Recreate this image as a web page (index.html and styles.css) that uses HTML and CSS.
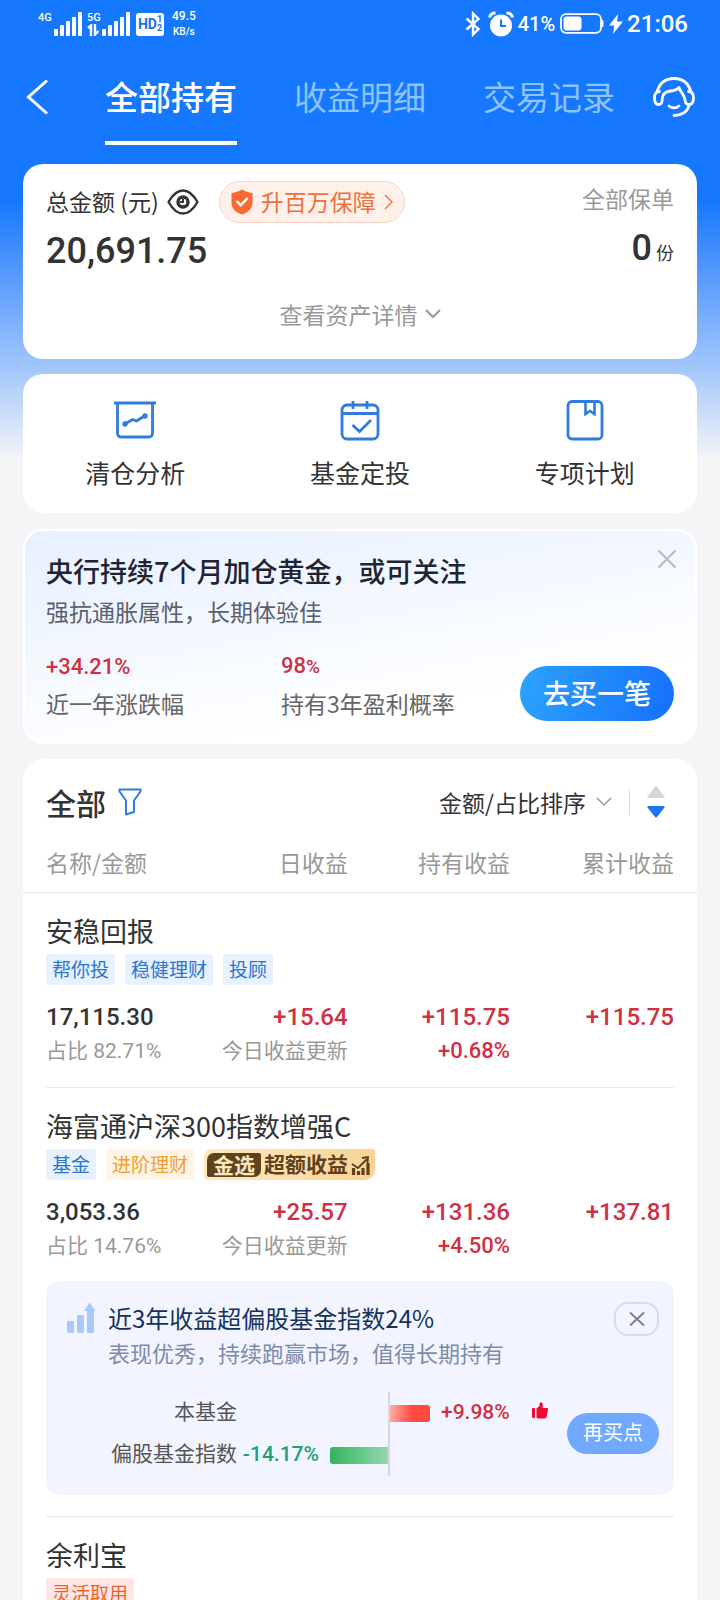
FILE: index.html
```html
<!DOCTYPE html>
<html lang="zh-CN">
<head>
<meta charset="utf-8">
<meta name="viewport" content="width=device-width, initial-scale=1">
<title>全部持有</title>
<link rel="stylesheet" href="styles.css">
</head>
<body>
<div class="screen">
  <div class="status">
    <div class="status-left">
      <span class="net">4G</span>
      <svg class="bars" width="28" height="24" viewBox="0 0 28 24" fill="currentColor"><rect x="0" y="17" width="4" height="7" rx="1"/><rect x="6" y="13" width="4" height="11" rx="1"/><rect x="12" y="9" width="4" height="15" rx="1"/><rect x="18" y="5" width="4" height="19" rx="1"/><rect x="24" y="0" width="4" height="24" rx="1"/></svg>
      <span class="net net-5g">5G
        <svg width="12" height="12" viewBox="0 0 12 12" fill="none" stroke="currentColor" stroke-width="2.4"><path d="M1 4 4 1.5V12M8 0v10.5L11.4 7"/></svg>
      </span>
      <svg class="bars" width="28" height="24" viewBox="0 0 28 24" fill="currentColor"><rect x="0" y="17" width="4" height="7" rx="1"/><rect x="6" y="13" width="4" height="11" rx="1"/><rect x="12" y="9" width="4" height="15" rx="1"/><rect x="18" y="5" width="4" height="19" rx="1"/><rect x="24" y="0" width="4" height="24" rx="1"/></svg>
      <span class="hd">HD<span class="hd-n"><span>1</span><span>2</span></span></span>
      <span class="speed"><span>49.5</span><span class="unit">KB/s</span></span>
    </div>
    <div class="status-right">
      <svg width="16" height="26" viewBox="0 0 16 26" fill="none" stroke="currentColor" stroke-width="2.4"><path d="M1.500 7.500 13.500 18 8 23.500V2.500L13.500 8 1.500 18.500"/></svg>
      <svg class="alarm" width="26" height="26" viewBox="0 0 26 26"><circle cx="13" cy="14.500" r="11" fill="#fff"/><path d="M1.500 6.500a6 6 0 0 1 6-4.500M24.500 6.500a6 6 0 0 0-6-4.500" fill="none" stroke="#fff" stroke-width="3"/><path d="M13 8.500V15h5" fill="none" stroke="#1677ff" stroke-width="2"/></svg>
      <span class="pct">41%</span>
      <svg width="44" height="22" viewBox="0 0 44 22"><rect x="1" y="1.200" width="40" height="18.600" rx="5" fill="none" stroke="#fff" stroke-width="1.800"/><rect x="3.500" y="3.500" width="18" height="14" rx="3" fill="#fff"/><path d="M42 7.500h1v6h-1z" fill="#fff" stroke="#fff"/></svg>
      <svg class="bolt" width="14" height="20" viewBox="0 0 14 20" fill="currentColor"><path d="M9 0 0 11.500h5.200L4 20 14 7.500H8z"/></svg>
      <span class="clock">21:06</span>
    </div>
  </div>

  <header class="nav">
    <button class="icon-btn" aria-label="返回"><svg width="23" height="36" viewBox="0 0 23 36" fill="none" stroke="currentColor" stroke-width="3"><path d="M21 1.500 2.500 18 21 34.500"/></svg></button>
    <nav class="tabs">
      <a class="tab active" href="#">全部持有</a>
      <a class="tab" href="#">收益明细</a>
      <a class="tab" href="#">交易记录</a>
    </nav>
    <button class="icon-btn" aria-label="客服"><svg width="42" height="40" viewBox="0 0 42 40" fill="none" stroke="currentColor" stroke-width="2.800" stroke-linecap="round" stroke-linejoin="round"><path d="M4 15C6.500 6 13 1.500 21 1.500S35.500 6 38 15"/><path d="M6.500 14.500C3 14.500 1.500 17 1.500 21s1.500 6.500 4 6.500c2.500 0 3.500-1.500 3.700-4.500.3-6.500 3.300-8.500 8.300-9 4-.3 6.500-1.300 8.500-3.500 1.500 5 5.500 6.500 6 12.500.2 3 1.500 4.500 4 4.500 3 0 4.500-2.500 4.500-6.500s-1.500-6.500-5-6.500"/><path d="M16 29c3 2.300 7 2.300 10 0M36 28c-1 6.500-7 10.500-15 10.500"/></svg></button>
  </header>

  <main class="main">
    <section class="card summary">
      <div class="sum-top">
        <div class="sum-label">
          <span>总金额 (元)</span>
          <button class="icon-btn eye" aria-label="隐藏金额"><svg width="32" height="26" viewBox="0 0 32 26" fill="none" stroke="currentColor" stroke-width="2.400" stroke-linejoin="round"><path d="M1.500 13C6 5 10.500 1.500 16 1.500S26 5 30.500 13C26 21 21.500 24.500 16 24.500S6 21 1.500 13z"/><circle cx="16" cy="13" r="5" stroke-width="3.400"/><path d="M13 13h3v-3" stroke-width="2"/></svg></button>
          <button class="pill"><svg width="22" height="26" viewBox="0 0 22 26"><path d="M11 .5c3 2 6.500 3 10.500 3.500V14c0 6-4.500 9.500-10.500 11.500C5 23.500.5 20 .5 14V4C4.500 3.500 8 2.500 11 .5z" fill="#fa6a32"/><path d="m5.500 12 4.200 4.200 7-7.200" fill="none" stroke="#fff" stroke-width="2.400"/></svg><span>升百万保障</span><svg width="9" height="16" viewBox="0 0 9 16" fill="none" stroke="currentColor" stroke-width="1.300"><path d="m1 1 7 7-7 7"/></svg></button>
        </div>
        <span class="muted policy">全部保单</span>
      </div>
      <div class="sum-values">
        <strong class="total">20,691.75</strong>
        <span class="count"><strong class="total">0</strong> 份</span>
      </div>
      <button class="details">查看资产详情<svg width="16" height="10" viewBox="0 0 16 10" fill="none" stroke="currentColor" stroke-width="2"><path d="m1 1 7 7 7-7"/></svg></button>
    </section>

    <section class="card tools">
      <a class="tool" href="#"><svg width="44" height="44" viewBox="0 0 44 44" fill="none" stroke="currentColor" stroke-width="2.800"><path d="M1 4h42M4.500 4v30q0 4 4 4h27q4 0 4-4V4"/><path d="m12 25 7.500-4.500 4 1.500 8-5"/><circle cx="12" cy="25" r="1.700" fill="currentColor" stroke-width="2"/><circle cx="32" cy="17" r="1.700" fill="currentColor" stroke-width="2"/></svg>清仓分析</a>
      <a class="tool" href="#"><svg width="44" height="44" viewBox="0 0 44 44" fill="none" stroke="currentColor" stroke-width="2.800"><rect x="4" y="6" width="36" height="34" rx="5"/><path d="M4 14.500h36M15 2v8M29 2v8M14.500 26l7 6.500L33 21"/></svg>基金定投</a>
      <a class="tool" href="#"><svg width="44" height="44" viewBox="0 0 44 44" fill="none" stroke="currentColor" stroke-width="2.800"><rect x="5" y="2.500" width="34" height="37.500" rx="4"/><path d="M22.500 3v12l4.500-3 4.500 3V3" stroke-width="2.600"/></svg>专项计划</a>
    </section>

    <section class="card promo">
      <button class="icon-btn promo-close" aria-label="关闭"><svg width="20" height="20" viewBox="0 0 20 20" fill="none" stroke="currentColor" stroke-width="2"><path d="m1.500 1.500 17 17m0-17-17 17"/></svg></button>
      <h2 class="promo-title">央行持续7个月加仓黄金，或可关注</h2>
      <p class="promo-sub">强抗通胀属性，长期体验佳</p>
      <div class="metrics">
        <div><div class="metric-num">+34.21%</div><div class="metric-label">近一年涨跌幅</div></div>
        <div><div class="metric-num">98<small>%</small></div><div class="metric-label">持有3年盈利概率</div></div>
        <button class="buy">去买一笔</button>
      </div>
    </section>

    <section class="card list">
      <div class="list-head">
        <h2 class="list-title">全部</h2>
        <button class="icon-btn filter" aria-label="筛选"><svg width="24" height="28" viewBox="0 0 24 28" fill="none" stroke="currentColor" stroke-width="2" stroke-linejoin="round"><path d="M1.500 1.500h21v2L16 12.500V24l-8 2.500V12.500L1.500 3.500z"/></svg></button>
        <select class="sort" aria-label="排序方式"><option>金额/占比排序</option></select>
        <svg class="sort-arrow" width="16" height="10" viewBox="0 0 16 10" fill="none" stroke="currentColor" stroke-width="1.500"><path d="m1 1 7 7 7-7"/></svg>
        <span class="vline"></span>
        <button class="icon-btn order" aria-label="切换升降序"><svg width="18" height="32" viewBox="0 0 18 32"><path d="M8 1q1-1 2 0l7.500 9.500q.5 1.500-1 1.500h-15Q0 12 .5 10.500z" fill="#d6d6d6"/><path d="M8 31q1 1 2 0l7.500-9.500q.5-1.500-1-1.500h-15Q0 20 .5 21.500z" fill="#1a73f8"/></svg></button>
      </div>
      <table class="holdings">
        <colgroup><col><col><col><col class="last-col"></colgroup>
        <thead><tr><th>名称/金额</th><th>日收益</th><th>持有收益</th><th>累计收益</th></tr></thead>
        <tbody>
          <tr><td class="name-cell" colspan="4"><div class="name">安稳回报</div><div class="tags"><span class="tag">帮你投</span><span class="tag">稳健理财</span><span class="tag">投顾</span></div></td></tr>
          <tr class="values">
            <td><div class="num">17,115.30</div><div class="sub">占比 82.71%</div></td>
            <td><div class="num up">+15.64</div><div class="sub">今日收益更新</div></td>
            <td><div class="num up">+115.75</div><div class="rate up">+0.68%</div></td>
            <td><div class="num up">+115.75</div></td>
          </tr>
          <tr><td class="rule-cell" colspan="4"><div class="rule"></div></td></tr>
        </tbody>
        <tbody>
          <tr><td class="name-cell" colspan="4"><div class="name">海富通沪深300指数增强C</div><div class="tags"><span class="tag">基金</span><span class="tag amber">进阶理财</span><span class="gold"><span class="gold-chip">金选</span><span class="gold-text">超额收益</span><svg width="19" height="20" viewBox="0 0 19 20" fill="none" stroke="currentColor"><path d="M2.500 20v-7M7.500 20v-4M12 20v-7M17 20V8" stroke-width="3.200"/><path d="m1 9 6 4 9-9M11 3l6-1-.5 6" stroke-width="1.800"/></svg></span></div></td></tr>
          <tr class="values">
            <td><div class="num">3,053.36</div><div class="sub">占比 14.76%</div></td>
            <td><div class="num up">+25.57</div><div class="sub">今日收益更新</div></td>
            <td><div class="num up">+131.36</div><div class="rate up">+4.50%</div></td>
            <td><div class="num up">+137.81</div></td>
          </tr>
          <tr><td class="insight-cell" colspan="4">
            <div class="insight">
              <svg class="insight-icon" width="29" height="32" viewBox="0 0 29 32" fill="#a9c9fa"><rect x="0" y="19" width="7" height="12" rx="1"/><rect x="10" y="13" width="7" height="18" rx="1"/><path d="M20 30V9h-3l5.500-8.500L28.500 9H27v21q0 1-1 1h-5q-1 0-1-1z"/></svg>
              <div class="insight-text">
                <div class="insight-title">近3年收益超偏股基金指数24%</div>
                <div class="insight-sub">表现优秀，持续跑赢市场，值得长期持有</div>
              </div>
              <button class="insight-close" aria-label="关闭"><svg width="16" height="14" viewBox="0 0 16 14" fill="none" stroke="currentColor" stroke-width="2"><path d="m1 .5 14 13m0-13-14 13"/></svg></button>
              <div class="chart">
                <span class="chart-label">本基金</span><span class="neg"></span>
                <span class="pos"><i class="bar red"></i><span class="chart-num up">+9.98%</span><svg class="thumb" width="16" height="17" viewBox="0 0 16 17" fill="#f5082f"><rect x="0" y="6" width="3" height="10" rx="1"/><path d="M4.500 6.500 7.500 4l.2-3c.8-1.400 3-.7 3 1.200V6H15q1.300.2 1 1.600l-1.400 7.200q-.4 1.700-2 1.700H6q-1.500 0-1.500-1.500z"/></svg></span>
                <span class="chart-label">偏股基金指数</span>
                <span class="neg"><span class="chart-num down">-14.17%</span><i class="bar green"></i></span><span class="pos"></span>
              </div>
              <button class="rebuy">再买点</button>
            </div>
          </td></tr>
          <tr><td class="rule-cell" colspan="4"><div class="rule"></div></td></tr>
        </tbody>
        <tbody>
          <tr><td class="name-cell" colspan="4"><div class="name">余利宝</div><div class="tags"><span class="tag rose">灵活取用</span></div></td></tr>
        </tbody>
      </table>
    </section>
  </main>
</div>
</body>
</html>
```
FILE: styles.css
```css
* { box-sizing: border-box; }
body, h2, p { margin: 0; }
body {
  font-family: "Noto Sans CJK SC", sans-serif;
  font-size: 23px;
  line-height: 30px;
  color: #333;
}
button, select { font: inherit; color: inherit; border: 0; background: none; padding: 0; margin: 0; }
a { color: inherit; text-decoration: none; }
svg { display: block; flex: none; }

.screen {
  height: 100vh;
  overflow: hidden auto;
  scrollbar-width: none;
  background: #f5f5f8 linear-gradient(#1677ff 0, #1677ff 200px, #4a93fb 260px, #a0c5fb 365px, #f5f5f8 460px) no-repeat;
}
.icon-btn { display: flex; }

/* status bar */
.status {
  display: flex;
  justify-content: space-between;
  align-items: center;
  height: 48px;
  padding: 0 32px 0 38px;
  color: #fff;
  font-family: Roboto, sans-serif;
  font-weight: 500;
}
.status-left, .status-right { display: flex; align-items: center; }
.net { align-self: flex-start; width: 16px; margin-top: 3px; font-size: 11px; line-height: 12px; }
.net-5g { width: 15px; margin-left: 5px; display: flex; flex-direction: column; }
.hd {
  display: flex;
  align-items: center;
  justify-content: center;
  width: 28px;
  height: 23px;
  margin-left: 6px;
  border-radius: 3px;
  background: #fff;
  color: #1f6fe0;
  font-size: 14px;
  font-weight: 700;
}
.hd-n { display: flex; flex-direction: column; font-size: 9px; line-height: 9px; }
.speed { display: flex; flex-direction: column; align-items: center; margin-left: 8px; font-size: 12px; line-height: 15px; }
.unit { font-size: 10px; }
.alarm { margin-left: 7px; }
.pct { margin: 0 5px 0 4px; font-size: 20px; }
.bolt { margin: 0 4px 0 5px; }
.clock { font-size: 24px; }

/* navigation */
.nav {
  display: flex;
  align-items: center;
  height: 97px;
  padding: 0 25px 0 26px;
  color: #fff;
}
.tabs { display: flex; gap: 57px; align-self: stretch; margin: 0 38px 0 auto; }
.tab {
  display: flex;
  align-items: center;
  padding-bottom: 2px;
  border-bottom: 4px solid transparent;
  border-top: 4px solid transparent;
  font-size: 33px;
  color: #8cc4ff;
}
.tab.active { border-bottom-color: #fff; color: #fff; font-weight: 500; }

/* cards */
.main { display: flex; flex-direction: column; gap: 15px; padding: 19px 23px 0; }
.card { border-radius: 20px; background: #fff; }
.muted { color: #999; }

.summary { display: flex; flex-direction: column; padding: 17px 23px 30px; }
.sum-top, .sum-values { display: flex; justify-content: space-between; }
.sum-label { display: flex; align-items: center; height: 42px; }
.eye { margin: 0 20px 0 8px; }
.pill {
  display: flex;
  align-items: center;
  gap: 8px;
  height: 42px;
  padding: 0 11px;
  border: 1px solid #fbd5c8;
  border-radius: 21px;
  background: #fff0ea;
  color: #f0703c;
}
.pill span, .sum-label > span { padding-bottom: 2px; }
.policy { line-height: 35px; }
.sum-values { margin-top: 6px; line-height: 44px; }
.total { font-family: Roboto, sans-serif; font-size: 36px; font-weight: 500; }
.count { font-size: 18px; line-height: 38px; }
.details { display: flex; align-items: center; align-self: center; gap: 7px; margin-top: 26px; color: #999; }

.tools { display: grid; grid-template-columns: repeat(3, 1fr); padding: 25px 0 23px; }
.tool { display: flex; flex-direction: column; align-items: center; gap: 11px; font-size: 25px; line-height: 36px; }
.tool svg { color: #2f7be0; }

.promo {
  position: relative;
  padding: 22px 21px 21px;
  border: 2px solid #fff;
  background: linear-gradient(170deg, #e6f0ff, #f5f9ff 45%, #fff 75%);
}
.tools + .promo { margin-top: 1px; }
.promo-close { position: absolute; top: 18px; right: 18px; color: #b5bac4; }
.promo-title { font-size: 27px; line-height: 36px; font-weight: 500; color: #1f2433; }
.promo-sub { margin-top: 7px; color: #5a606e; }
.metrics { display: grid; grid-template-columns: 235px 1fr auto; margin-top: 26px; align-items: end; }
.metric-num { font-family: Roboto, sans-serif; font-size: 22px; font-weight: 500; line-height: 28px; color: #cf3043; }
.metric-num small { font-size: 19px; }
.metric-label { margin-top: 7px; padding-bottom: 3px; color: #666; }
.buy {
  height: 55px;
  padding: 0 23px 2px;
  border-radius: 28px;
  background: linear-gradient(100deg, #2ba3fb, #1670fb);
  color: #fff;
  font-size: 27px;
  font-weight: 500;
}

/* holdings list */
.list { padding-bottom: 24px; }
.list-head { display: flex; align-items: center; padding: 21px 32px 0 23px; line-height: 44px; }
.list-title { font-size: 30px; font-weight: 500; }
.filter { margin: 0 auto 0 12px; color: #2f7be0; }
.sort { appearance: none; outline: 0; }
.sort-arrow { margin: 0 17px 0 9px; color: #999; }
.vline { width: 1px; height: 26px; margin-right: 17px; background: #ddd; }

.holdings { width: 100%; table-layout: fixed; border-collapse: collapse; }
.last-col { width: 187px; }
th, td { padding: 0; text-align: right; vertical-align: top; font-weight: 400; }
th { padding: 21px 0 13px; line-height: 34px; color: #999; border-bottom: 1px solid #e8e8e8; }
tr > :first-child { padding-left: 23px; text-align: left; }
tr > :last-child { padding-right: 23px; }
td.name-cell { padding-top: 20px; }
.name { font-size: 27px; line-height: 36px; }
.tags { display: flex; gap: 10px; margin-top: 5px; }
.tag { padding: 0 6px 2px; border-radius: 3px; background: #e7f1ff; color: #2c76cf; font-size: 19px; line-height: 29px; }
.tag.amber { background: #fff4e5; color: #efa02e; }
.tag.rose { background: #ffe5e5; color: #e8662c; }
.gold {
  display: flex;
  align-items: center;
  gap: 3px;
  padding: 0 5px 0 3px;
  border-radius: 8px 2px 10px 2px;
  background: linear-gradient(90deg, #fdeac0, #f9d394);
  color: #5f421c;
  font-size: 21px;
  font-weight: 700;
}
.gold-chip { padding: 0 6px 2px; border-radius: 7px 2px 7px 2px; background: #5f421c; color: #fbe6bd; line-height: 22px; }
.gold-text { padding-bottom: 3px; line-height: 28px; }
.num, .rate, .chart-num { font-family: Roboto, "Noto Sans CJK SC", sans-serif; font-weight: 500; }
.values td { padding-top: 15px; white-space: nowrap; }
.num { font-size: 24px; line-height: 34px; }
.sub, .rate { margin-top: 2px; line-height: 30px; }
.sub { font-family: Roboto, "Noto Sans CJK SC", sans-serif; font-size: 21px; color: #999; }
.rate { font-size: 22px; }
.up { color: #cf3043; }
.down { color: #24a077; }
.rule { height: 1px; margin-top: 21px; background: #e8e8e8; }

/* comparison panel */
td.insight-cell { padding-top: 20px; }
.insight {
  display: grid;
  grid-template-columns: 29px 1fr auto;
  column-gap: 12px;
  padding: 19px 15px 19px 21px;
  border-radius: 14px;
  background: #f2f5ff;
}
.insight-icon { margin-top: 2px; }
.insight-title { font-size: 24px; line-height: 36px; color: #14325e; }
.insight-sub { font-size: 22px; line-height: 32px; color: #7c8ca8; white-space: nowrap; }
.insight-close {
  display: flex;
  align-items: center;
  justify-content: center;
  justify-self: end;
  width: 45px;
  height: 34px;
  margin-top: 2px;
  border: 2px solid #d8dce8;
  border-radius: 14px;
  color: #75829a;
}
.chart {
  grid-column: 2;
  display: grid;
  grid-template-columns: 129px 153px 1fr;
  grid-auto-rows: 42px;
  margin-top: 24px;
  line-height: 42px;
}
.chart-label { font-size: 21px; line-height: 36px; text-align: right; color: #555; }
.chart-num { padding-bottom: 1px; font-size: 21px; line-height: 41px; }
.neg, .pos { display: flex; align-items: center; }
.neg { justify-content: flex-end; gap: 11px; border-right: 2px solid #d5d8e2; }
.bar { height: 17px; }
.red { width: 40px; border-radius: 0 3px 3px 0; background: linear-gradient(90deg, #ffaaa6, #ff4a40 55%); }
.green { width: 58px; border-radius: 3px 0 0 3px; background: linear-gradient(90deg, #31b45f, #93d9ae); }
.pos .chart-num { margin-left: 11px; }
.thumb { margin: 0 0 6px 22px; }
.rebuy {
  align-self: center;
  height: 41px;
  padding: 0 16px 2px;
  margin-top: 22px;
  border-radius: 21px;
  background: #71a9ff;
  color: #fff;
  font-size: 20px;
}
```
